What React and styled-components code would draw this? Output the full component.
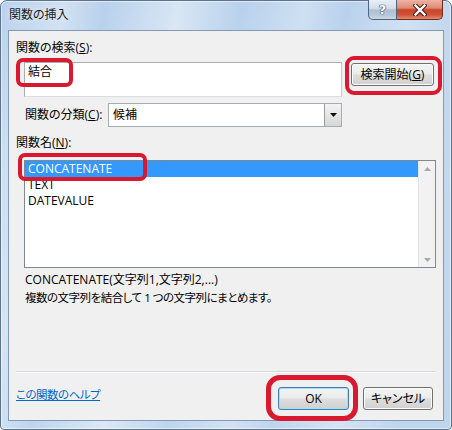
import React from 'react';
import styled, { createGlobalStyle, css } from 'styled-components';

const UI = `"Open Sans", "Noto Sans CJK JP", sans-serif`;

const Global = createGlobalStyle`
  html, body { margin: 0; padding: 0; background: #ffffff; }
  body { font-family: ${UI}; font-size: 12px; color: #000; font-feature-settings: "palt" 1; }
  * { box-sizing: border-box; }
`;

const compactText = css`
  font-size: 11.5px;
  letter-spacing: -0.5px;
`;

const Window = styled.div`
  width: 452px;
  height: 430px;
  display: flex;
  flex-direction: column;
  padding: 0 7px 8px 7px;
  border: 1px solid #5d7390;
  border-radius: 7px 7px 4px 4px;
  background:
    linear-gradient(100deg,
      rgba(255,255,255,0) 0%, rgba(255,255,255,0.35) 12%, rgba(255,255,255,0) 20%,
      rgba(255,255,255,0.45) 34%, rgba(255,255,255,0) 46%,
      rgba(255,255,255,0.3) 58%, rgba(255,255,255,0) 66%,
      rgba(255,255,255,0.35) 78%, rgba(255,255,255,0) 90%),
    linear-gradient(180deg, #b8d1ec 0%, #c3d9f0 40%, #bed5ee 100%);
  box-shadow: inset 0 0 0 1px rgba(255, 255, 255, 0.55);
`;

const TitleBar = styled.div`
  height: 29px;
  display: flex;
  align-items: flex-start;
  flex-shrink: 0;
`;

const Title = styled.div`
  margin-top: 6px;
  padding-left: 1px;
  line-height: 16px;
  font-size: 12px;
  color: #1a1a1a;
  text-shadow: 0 0 6px rgba(255, 255, 255, 0.9);
`;

const CaptionGroup = styled.div`
  margin-left: auto;
  margin-right: 1px;
  margin-top: -1px;
  display: flex;
`;

const CaptionButton = styled.div`
  height: 20px;
  display: flex;
  align-items: center;
  justify-content: center;
  border: 1px solid #4e647f;
  border-top: none;
  ${(p) =>
    p.$kind === 'close'
      ? css`
          width: 46px;
          border-left: none;
          border-color: #6b2a20;
          border-radius: 0 0 5px 0;
          background: linear-gradient(180deg, #eeb3a4 0%, #de8a74 42%, #c8452c 52%, #cf5236 78%, #e28f73 100%);
        `
      : css`
          width: 29px;
          border-radius: 0 0 0 5px;
          background: linear-gradient(180deg, #e9eff6 0%, #d3dde9 44%, #afbfd3 52%, #b9c8da 80%, #cbd7e5 100%);
        `}
`;

const HelpGlyph = styled.span`
  font-family: "DejaVu Sans", sans-serif;
  font-weight: bold;
  font-size: 13px;
  line-height: 14px;
  color: #ffffff;
  text-shadow: 0 0 1px #2f3d52, 0 0 1px #2f3d52, 0 0 1px #2f3d52;
`;

const Client = styled.div`
  flex: 1;
  display: flex;
  flex-direction: column;
  background: #f0f0f0;
  border: 1px solid #8498b2;
  padding: 9px 7px 10px 7px;
`;

const FieldLabel = styled.div`
  line-height: 16px;
  height: 16px;
  white-space: nowrap;
  ${(p) => p.$top && css`margin-top: ${p.$top}px;`}
`;

const SearchRow = styled.div`
  display: flex;
  align-items: flex-start;
  margin-top: 6px;
  padding-left: 8px;
`;

const Anchor = styled.div`
  position: relative;
  flex-shrink: 0;
`;

const Highlight = styled.div`
  position: absolute;
  left: ${(p) => p.$l}px;
  top: ${(p) => p.$t}px;
  width: ${(p) => p.$w}px;
  height: ${(p) => p.$h}px;
  border: ${(p) => p.$b || 4}px solid #d8192f;
  border-radius: ${(p) => p.$r || 7}px;
  pointer-events: none;
`;

const TextBox = styled.div`
  width: 318px;
  height: 35px;
  background: #ffffff;
  border: 1px solid #abadb3;
  border-right-color: #c5c9d0;
  border-bottom-color: #dadde2;
  padding: 1px 3px;
  line-height: 16px;
`;

const PushButton = styled.div`
  height: 23px;
  width: ${(p) => p.$w}px;
  display: flex;
  align-items: center;
  justify-content: center;
  white-space: nowrap;
  line-height: 16px;
  border: 1px solid ${(p) => (p.$default ? '#3c7fb1' : '#707070')};
  border-radius: 3px;
  background: linear-gradient(180deg, #f4f4f4 0%, #ececec 45%, #dedede 52%, #d0d0d0 100%);
  box-shadow: inset 0 0 0 1px ${(p) => (p.$default ? '#9fe0f7' : '#fbfbfb')};
`;

const SearchButtonSlot = styled.div`
  margin-left: 9px;
  margin-top: 1px;
`;

const CategoryRow = styled.div`
  display: flex;
  align-items: center;
  height: 24px;
  margin-top: 6px;
  padding-left: 9px;
`;

const CategoryLabel = styled.div`
  width: 83px;
  line-height: 16px;
  white-space: nowrap;
`;

const Select = styled.div`
  width: 234px;
  height: 24px;
  display: flex;
  align-items: center;
  background: #ffffff;
  border: 1px solid #a7abb2;
`;

const SelectValue = styled.div`
  flex: 1;
  padding-left: 4px;
  line-height: 16px;
`;

const DropButton = styled.div`
  width: 17px;
  height: 22px;
  display: flex;
  align-items: center;
  justify-content: center;
  border-left: 1px solid #9a9a9a;
  background: linear-gradient(180deg, #f3f3f3 0%, #e6e6e6 50%, #d6d6d6 100%);
`;

const ListArea = styled.div`
  margin-top: 9px;
  padding-left: 8px;
  display: flex;
`;

const ListBox = styled.div`
  width: 412px;
  height: 108px;
  display: flex;
  background: #ffffff;
  border: 1px solid #828790;
`;

const Items = styled.div`
  flex: 1;
  display: flex;
  flex-direction: column;
`;

const Item = styled.div`
  height: 16px;
  line-height: 16px;
  padding-left: 3px;
  white-space: nowrap;
  ${(p) =>
    p.$selected &&
    css`
      background: #3399ff;
      color: #ffffff;
    `}
`;

const ScrollBar = styled.div`
  width: 17px;
  display: flex;
  flex-direction: column;
  justify-content: space-between;
  align-items: center;
  background: #f2f2f2;
  border-left: 1px solid #e6e6e6;
  padding: 6px 0 5px;
`;

const Description = styled.div`
  margin-top: 3px;
  padding-left: 9px;
  display: flex;
  flex-direction: column;
`;

const DescLine = styled.div`
  height: 18px;
  line-height: 18px;
  white-space: nowrap;
  ${(p) => p.$compact && compactText}
`;

const Footer = styled.div`
  margin-top: auto;
  display: flex;
  flex-direction: column;
`;

const Separator = styled.div`
  height: 2px;
  border-top: 1px solid #d5d9de;
  border-bottom: 1px solid #fbfbfb;
`;

const ButtonRow = styled.div`
  margin-top: 14px;
  display: flex;
  align-items: flex-start;
`;

const HelpLink = styled.a`
  line-height: 16px;
  color: #0066cc;
  text-decoration: underline;
  cursor: pointer;
  ${compactText}
`;

const OkSlot = styled.div`
  margin-left: auto;
`;

const CancelSlot = styled.div`
  margin-left: 14px;
  margin-right: 3px;
`;

const Tri = ({ dir = 'down', color = '#000', w = 7, h = 4 }) => (
  <svg width={w} height={h} viewBox={`0 0 ${w} ${h}`}>
    {dir === 'down' ? (
      <polygon points={`0,0 ${w},0 ${w / 2},${h}`} fill={color} />
    ) : (
      <polygon points={`0,${h} ${w},${h} ${w / 2},0`} fill={color} />
    )}
  </svg>
);

const CloseGlyph = () => (
  <svg width="14" height="12" viewBox="0 0 14 12">
    <path d="M2.5 1.5 L11.5 10.5 M11.5 1.5 L2.5 10.5" stroke="#4a1a12" strokeWidth="4.4" strokeLinecap="square" />
    <path d="M2.5 1.5 L11.5 10.5 M11.5 1.5 L2.5 10.5" stroke="#ffffff" strokeWidth="2.4" strokeLinecap="square" />
  </svg>
);

const functions = ['CONCATENATE', 'TEXT', 'DATEVALUE'];

export default function App() {
  return (
    <>
      <Global />
      <Window>
        <TitleBar>
          <Title>関数の挿入</Title>
          <CaptionGroup>
            <CaptionButton $kind="help">
              <HelpGlyph>?</HelpGlyph>
            </CaptionButton>
            <CaptionButton $kind="close">
              <CloseGlyph />
            </CaptionButton>
          </CaptionGroup>
        </TitleBar>
        <Client>
          <FieldLabel>
            関数の検索(<u>S</u>):
          </FieldLabel>
          <SearchRow>
            <Anchor>
              <TextBox>結合</TextBox>
              <Highlight $l={-8} $t={-4} $w={57} $h={29} />
            </Anchor>
            <SearchButtonSlot>
              <Anchor>
                <PushButton $w={83}>
                  検索開始(<u>G</u>)
                </PushButton>
                <Highlight $l={-6} $t={-7} $w={97} $h={39} $r={9} />
              </Anchor>
            </SearchButtonSlot>
          </SearchRow>
          <CategoryRow>
            <CategoryLabel>
              関数の分類(<u>C</u>):
            </CategoryLabel>
            <Select>
              <SelectValue>候補</SelectValue>
              <DropButton>
                <Tri dir="down" color="#111" w={7} h={4} />
              </DropButton>
            </Select>
          </CategoryRow>
          <FieldLabel $top={8}>
            関数名(<u>N</u>):
          </FieldLabel>
          <ListArea>
            <Anchor>
              <ListBox>
                <Items>
                  {functions.map((f, i) => (
                    <Item key={f} $selected={i === 0}>
                      {f}
                    </Item>
                  ))}
                </Items>
                <ScrollBar>
                  <Tri dir="up" color="#a9a9a9" w={7} h={4} />
                  <Tri dir="down" color="#a9a9a9" w={7} h={4} />
                </ScrollBar>
              </ListBox>
              <Highlight $l={-6} $t={-7} $w={129} $h={28} />
            </Anchor>
          </ListArea>
          <Description>
            <DescLine>CONCATENATE(文字列1,文字列2,...)</DescLine>
            <DescLine $compact>複数の文字列を結合して 1 つの文字列にまとめます。</DescLine>
          </Description>
          <Footer>
            <Separator />
            <ButtonRow>
              <HelpLink>この関数のヘルプ</HelpLink>
              <OkSlot>
                <Anchor>
                  <PushButton $w={71} $default>
                    OK
                  </PushButton>
                  <Highlight $l={-12} $t={-12} $w={92} $h={46} $b={5} $r={14} />
                </Anchor>
              </OkSlot>
              <CancelSlot>
                <PushButton $w={70}>キャンセル</PushButton>
              </CancelSlot>
            </ButtonRow>
          </Footer>
        </Client>
      </Window>
    </>
  );
}
